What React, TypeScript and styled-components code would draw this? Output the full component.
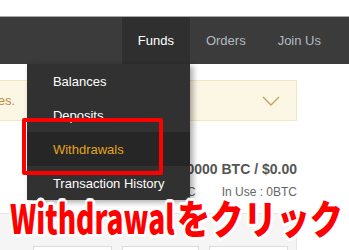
import React from 'react';
import styled, {createGlobalStyle} from 'styled-components';

const GlobalStyle = createGlobalStyle`
  html, body {
    margin: 0;
    padding: 0;
    background: #ffffff;
    font-family: "Liberation Sans", Arial, sans-serif;
    overflow: hidden;
  }
`;

const Page = styled.div`
  position: relative;
  width: 349px;
  height: 250px;
  overflow: hidden;
  padding-top: 16px;
  box-sizing: border-box;
`;

const NavBar = styled.nav`
  display: flex;
  justify-content: flex-end;
  height: 47px;
  padding-right: 12px;
  background: #3b3b3b;
  border-top: 1px solid #a9a9a9;
`;

const NavItem = styled.div<{$active?: boolean}>`
  position: relative;
  display: flex;
  align-items: center;
  padding: 0 16px;
  font-size: 13px;
  color: ${p => (p.$active ? '#ffffff' : '#b3bac2')};
  background: ${p => (p.$active ? '#2f2f2f' : 'transparent')};
`;

const Menu = styled.ul`
  position: absolute;
  top: 100%;
  right: 0;
  width: 163px;
  margin: 0;
  padding: 0;
  list-style: none;
  background: #313131;
  box-shadow: 3px 2px 6px rgba(0, 0, 0, 0.35);
  z-index: 2;
`;

const MenuItem = styled.li<{$selected?: boolean}>`
  display: flex;
  align-items: center;
  height: 34px;
  padding-left: 26px;
  font-size: 13px;
  color: ${p => (p.$selected ? '#e3a51c' : '#ffffff')};
  background: ${p => (p.$selected ? '#262626' : 'transparent')};
  white-space: nowrap;
`;

const Content = styled.main`
  width: 297px;
  padding-top: 16px;
`;

const Alert = styled.div`
  display: flex;
  align-items: center;
  justify-content: space-between;
  height: 39px;
  padding-right: 16px;
  background: #fcf6e4;
  border: 1px solid #f4e6c4;
  border-left: none;
`;

const AlertText = styled.span`
  display: flex;
  justify-content: flex-end;
  width: 15px;
  min-width: 0;
  flex-shrink: 0;
  white-space: nowrap;
  font-size: 13px;
  color: #b88a45;
`;

const Balance = styled.div`
  margin-top: 40px;
  text-align: right;
  color: #555555;
`;

const Total = styled.div`
  font-size: 14px;
  font-weight: bold;
  line-height: 16px;
`;

const Sub = styled.div`
  display: flex;
  justify-content: flex-end;
  gap: 26px;
  margin-top: 8px;
  font-size: 12px;
  line-height: 15px;
  color: #666666;
`;

const Panel = styled.section`
  display: flex;
  gap: 10px;
  margin-top: 13px;
  height: 60px;
  padding: 32px 0 0 33px;
  background: #f5f5f5;
  border-top: 1px solid #e4e4e4;
  border-right: 1px solid #e4e4e4;
`;

const Field = styled.div<{$w: number}>`
  width: ${p => p.$w}px;
  height: 30px;
  background: #ffffff;
  border: 1px solid #dcdcdc;
`;

const Highlight = styled.div`
  position: absolute;
  left: 22px;
  top: 118px;
  width: 141px;
  height: 57px;
  box-sizing: border-box;
  border: 4px solid #ff0000;
  border-radius: 2px;
  z-index: 3;
`;

const outline = [
  [3, 0], [-3, 0], [0, 3], [0, -3],
  [2, 2], [-2, 2], [2, -2], [-2, -2],
  [3, 1], [-3, 1], [3, -1], [-3, -1],
  [1, 3], [-1, 3], [1, -3], [-1, -3],
]
  .map(([x, y]) => `${x}px ${y}px 0 #ffffff`)
  .join(', ');

const Caption = styled.div`
  position: absolute;
  left: 10px;
  top: 192px;
  display: flex;
  font-family: "Noto Sans CJK JP", sans-serif;
  font-size: 40px;
  font-weight: 900;
  line-height: 50px;
  color: #ff0000;
  white-space: nowrap;
  z-index: 4;
`;

const CaptionPart = styled.span<{$w: number; $scale: number}>`
  display: block;
  width: ${p => p.$w}px;
  transform: scaleX(${p => p.$scale});
  transform-origin: left top;
  text-shadow: ${outline};
`;

const ChevronDown = () => (
  <svg width="18" height="10" viewBox="0 0 18 10">
    <polyline points="1,1 9,9 17,1" fill="none" stroke="#c9a25e" strokeWidth="1.4" />
  </svg>
);

export default function App() {
  return (
    <Page>
      <GlobalStyle />
      <NavBar>
        <NavItem $active>
          Funds
          <Menu>
            <MenuItem>Balances</MenuItem>
            <MenuItem>Deposits</MenuItem>
            <MenuItem $selected>Withdrawals</MenuItem>
            <MenuItem>Transaction History</MenuItem>
          </Menu>
        </NavItem>
        <NavItem>Orders</NavItem>
        <NavItem>Join Us</NavItem>
      </NavBar>
      <Content>
        <Alert>
          <AlertText>Please confirm the withdrawal fees.</AlertText>
          <ChevronDown />
        </Alert>
        <Balance>
          <Total>Total : 0.00000000 BTC / $0.00</Total>
          <Sub>
            <span>Available : 0BTC</span>
            <span>In Use : 0BTC</span>
          </Sub>
        </Balance>
        <Panel>
          <Field $w={77} />
          <Field $w={75} />
          <Field $w={77} />
        </Panel>
      </Content>
      <Highlight />
      <Caption>
        <CaptionPart $w={167} $scale={0.7}>Withdrawal</CaptionPart>
        <CaptionPart $w={166} $scale={0.83}>をクリック</CaptionPart>
      </Caption>
    </Page>
  );
}
